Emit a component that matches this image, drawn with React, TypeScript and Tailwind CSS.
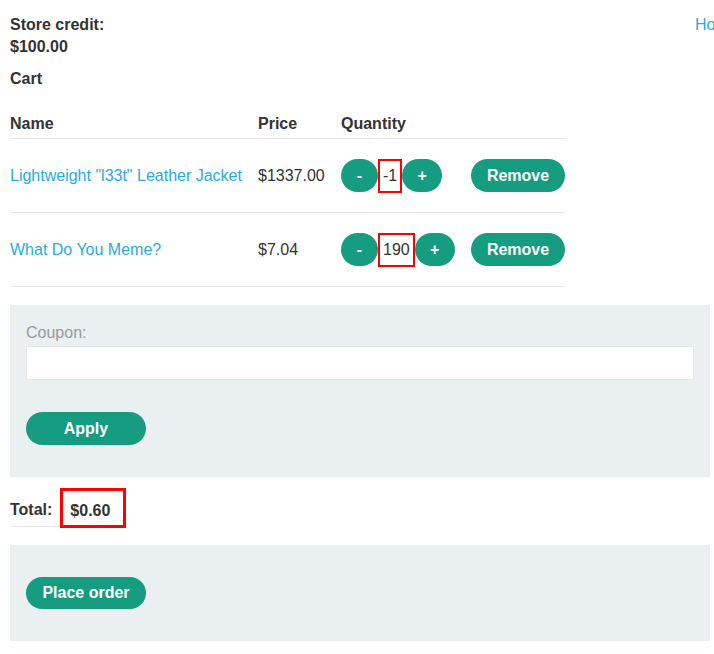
import React from 'react';

type Item = { name: string; price: string; qty: string };

const items: Item[] = [
  { name: 'Lightweight "l33t" Leather Jacket', price: '$1337.00', qty: '-1' },
  { name: 'What Do You Meme?', price: '$7.04', qty: '190' },
];

const btn = 'rounded-full bg-[#169c80] text-white font-bold text-[16px] leading-none flex items-center justify-center';

function QtyControl({ qty }: { qty: string }) {
  return (
    <div className="flex items-center">
      <span className={`${btn} w-[37px] h-[33px]`}>-</span>
      <span className="h-[34px] px-[3px] border-2 border-[#ff0000] flex items-center text-[16px] leading-none">{qty}</span>
      <span className={`${btn} w-[40px] h-[33px]`}>+</span>
    </div>
  );
}

export default function App() {
  return (
    <div className="w-[714px] h-[654px] overflow-hidden bg-white text-[#333332] text-[16px] font-['Liberation_Sans',Arial,sans-serif]">
      <div className="pl-[10px] pr-[4px] pt-[14px]">
        <div className="flex">
          <div className="w-[685px] shrink-0">
            <p className="font-bold leading-[22px]">Store credit:</p>
            <p className="font-bold leading-[22px]">$100.00</p>
          </div>
          <a className="whitespace-nowrap text-[#29abe2] leading-[22px]">Home</a>
        </div>
        <p className="font-bold leading-[22px] mt-[10px]">Cart</p>

        <div className="w-[555px] mt-[19px]">
          <div className="flex h-[30px] items-center border-b border-[#e6e6e6] font-bold">
            <div className="w-[248px]">Name</div>
            <div className="w-[83px]">Price</div>
            <div className="w-[130px]">Quantity</div>
            <div className="w-[94px]"></div>
          </div>
          {items.map((it) => (
            <div key={it.name} className="flex h-[74px] items-center border-b border-[#e6e6e6]">
              <div className="w-[248px] text-[#29abe2] whitespace-nowrap">{it.name}</div>
              <div className="w-[83px]">{it.price}</div>
              <div className="w-[130px]">
                <QtyControl qty={it.qty} />
              </div>
              <div className="w-[94px]">
                <span className={`${btn} w-[94px] h-[33px]`}>Remove</span>
              </div>
            </div>
          ))}
        </div>

        <div className="mt-[18px] bg-[#eaeff2] px-[16px] pt-[17px] pb-[32px]">
          <label className="block text-[#999999] leading-[22px]">Coupon:</label>
          <div className="mt-[2px] h-[34px] bg-white border border-[#e6e6e6]"></div>
          <span className={`${btn} mt-[32px] w-[120px] h-[33px]`}>Apply</span>
        </div>

        <div className="mt-[11px] inline-flex items-center border-b border-[#e6e6e6]">
          <span className="font-bold pr-[8px] pt-[6px] leading-[22px]">Total:</span>
          <span className="font-bold h-[40px] w-[66px] px-[7px] pt-[6px] border-[3px] border-[#ff0000] flex items-center -mb-[2px]">$0.60</span>
        </div>

        <div className="mt-[18px] bg-[#eaeff2] px-[16px] py-[32px]">
          <span className={`${btn} w-[120px] h-[32px]`}>Place order</span>
        </div>
      </div>
    </div>
  );
}
